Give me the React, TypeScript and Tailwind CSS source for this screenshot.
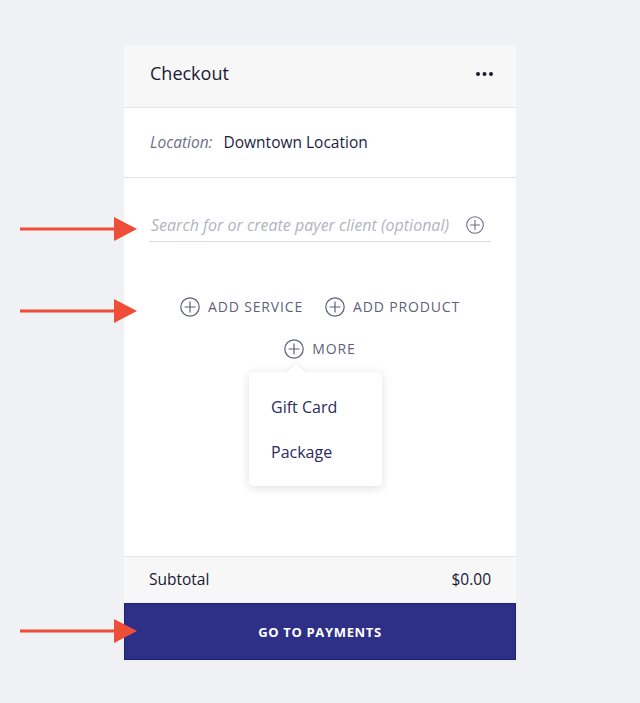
import type { ReactNode } from "react";

function PlusCircle({ size = 20 }: { size?: number }) {
  return (
    <svg
      width={size}
      height={size}
      viewBox="0 0 20 20"
      fill="none"
      stroke="currentColor"
      strokeWidth="1.2"
    >
      <circle cx="10" cy="10" r="9.2" />
      <path d="M10 4.5v11M4.5 10h11" />
    </svg>
  );
}

function Arrow({ top }: { top: number }) {
  return (
    <svg
      className="absolute left-[20px]"
      style={{ top }}
      width="118"
      height="26"
      viewBox="0 0 118 26"
    >
      <rect x="0" y="11.5" width="100" height="3" fill="#ee4d38" />
      <path d="M94 1 L117 13 L94 25 Z" fill="#ee4d38" />
    </svg>
  );
}

function AddButton({ children }: { children: ReactNode }) {
  return (
    <button className="flex items-center gap-[8px] text-[#5f5f7a]">
      <PlusCircle />
      <span className="text-[14px] tracking-[0.06em] uppercase">{children}</span>
    </button>
  );
}

export default function App() {
  return (
    <div
      className="relative min-h-[703px] bg-[#f0f1f5] pt-[45px] flex justify-center"
      style={{ fontFamily: "'Open Sans', 'Noto Sans', sans-serif" }}
    >
      <Arrow top={216} />
      <Arrow top={298} />
      <Arrow top={618} />

      <div className="w-[392px] h-[615px] flex flex-col bg-white">
        <div className="h-[63px] flex items-center justify-between pl-[26px] pr-[23px] pb-[5px] bg-[#f7f7f8] border-b border-[#e3e3e8]">
          <h1 className="text-[18px] text-[#191935]">Checkout</h1>
          <svg width="17" height="4" viewBox="0 0 17 4">
            <circle cx="2" cy="2" r="2" fill="#191935" />
            <circle cx="8.5" cy="2" r="2" fill="#191935" />
            <circle cx="15" cy="2" r="2" fill="#191935" />
          </svg>
        </div>

        <div className="h-[70px] flex items-center gap-[11px] px-[26px] border-b border-[#e3e3e8] text-[15.5px]">
          <span className="italic text-[#6e6e88]">Location:</span>
          <span className="text-[#1d1d45]">Downtown Location</span>
        </div>

        <div className="flex-1 flex flex-col items-center px-[25px] pt-[35px]">
          <div className="w-full flex items-center justify-between h-[29px] border-b border-[#dcdce2] pb-[4px]">
            <span className="italic text-[16px] text-[#b3b3bd] pl-[2px]">
              Search for or create payer client (optional)
            </span>
            <span className="text-[#6e6e88] mr-[7px]">
              <PlusCircle size={18} />
            </span>
          </div>

          <div className="flex items-center gap-[22px] mt-[54px]">
            <AddButton>Add Service</AddButton>
            <AddButton>Add Product</AddButton>
          </div>

          <div className="mt-[21px] relative flex flex-col items-center">
            <AddButton>More</AddButton>
            <div className="relative mt-[13px] -ml-[9px] w-[133px] h-[114px] rounded-[4px] bg-white shadow-[0_2px_10px_rgba(30,30,60,0.14)] flex flex-col justify-center gap-[21px] px-[22px] text-[16px] text-[#2b2b5c]">
              <div className="absolute -top-[6px] left-[41px] w-[12px] h-[12px] rotate-45 bg-white shadow-[-2px_-2px_4px_rgba(30,30,60,0.06)]" />
              <span className="relative">Gift Card</span>
              <span className="relative">Package</span>
            </div>
          </div>
        </div>

        <div className="h-[47px] flex items-center justify-between px-[25px] bg-[#f7f7f8] border-t border-[#e3e3e8] text-[15.5px] text-[#191935]">
          <span>Subtotal</span>
          <span>$0.00</span>
        </div>
        <button className="h-[57px] pt-[3px] bg-[#2e3088] border border-[#1f2170] text-white text-[13px] font-bold tracking-[0.05em]">
          GO TO PAYMENTS
        </button>
      </div>
    </div>
  );
}
